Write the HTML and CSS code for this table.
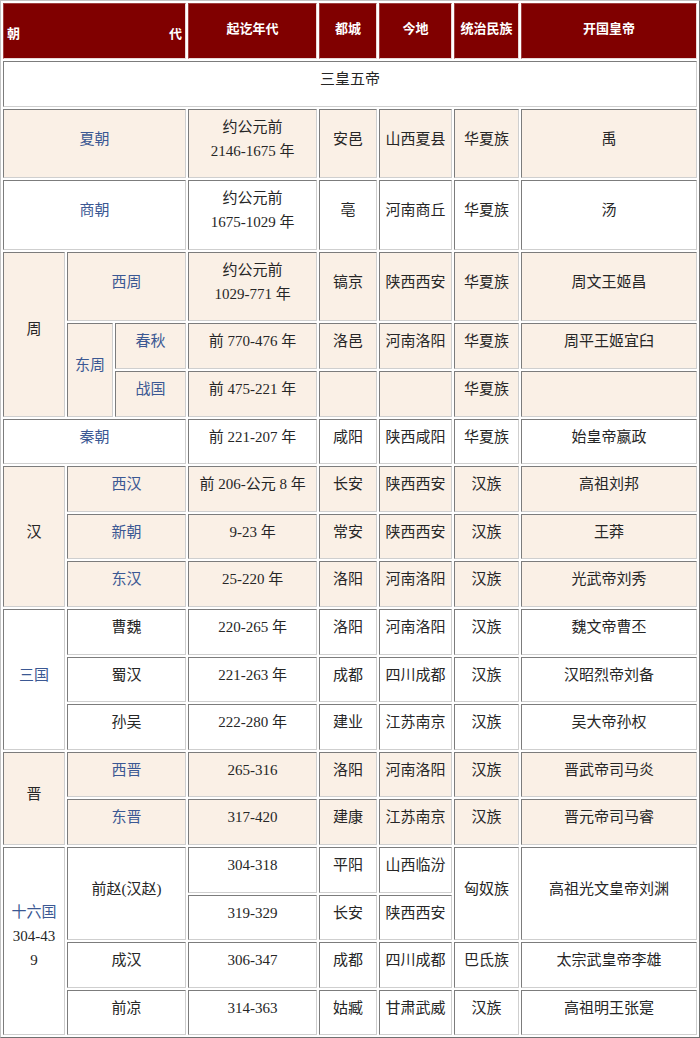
FILE: index.html
```html
<!DOCTYPE html>
<html lang="zh">
<head>
<meta charset="utf-8">
<title>中国历代王朝</title>
<link rel="stylesheet" href="styles.css">
</head>
<body>
<table class="dyn">
  <colgroup>
    <col class="c1"><col class="c2"><col class="c3"><col class="c4"><col class="c5"><col class="c6"><col class="c7"><col class="c8">
  </colgroup>
  <tr class="head">
    <th colspan="3" class="hd-dyn"><div class="split"><span>朝</span><span>代</span></div></th>
    <th>起讫年代</th>
    <th>都城</th>
    <th>今地</th>
    <th>统治民族</th>
    <th>开国皇帝</th>
  </tr>
  <tr>
    <td colspan="8">三皇五帝</td>
  </tr>
  <tr class="bg">
    <td colspan="3" class="lk">夏朝</td>
    <td>约公元前<br>2146-1675 年</td>
    <td>安邑</td>
    <td>山西夏县</td>
    <td>华夏族</td>
    <td>禹</td>
  </tr>
  <tr>
    <td colspan="3" class="lk">商朝</td>
    <td>约公元前<br>1675-1029 年</td>
    <td>亳</td>
    <td>河南商丘</td>
    <td>华夏族</td>
    <td>汤</td>
  </tr>
  <tr class="bg">
    <td rowspan="3">周</td>
    <td colspan="2" class="lk">西周</td>
    <td>约公元前<br>1029-771 年</td>
    <td>镐京</td>
    <td>陕西西安</td>
    <td>华夏族</td>
    <td>周文王姬昌</td>
  </tr>
  <tr class="bg">
    <td rowspan="2" class="lk">东周</td>
    <td class="lk">春秋</td>
    <td>前 770-476 年</td>
    <td>洛邑</td>
    <td>河南洛阳</td>
    <td>华夏族</td>
    <td>周平王姬宜臼</td>
  </tr>
  <tr class="bg">
    <td class="lk">战国</td>
    <td>前 475-221 年</td>
    <td></td>
    <td></td>
    <td>华夏族</td>
    <td></td>
  </tr>
  <tr>
    <td colspan="3" class="lk">秦朝</td>
    <td>前 221-207 年</td>
    <td>咸阳</td>
    <td>陕西咸阳</td>
    <td>华夏族</td>
    <td>始皇帝嬴政</td>
  </tr>
  <tr class="bg">
    <td rowspan="3">汉</td>
    <td colspan="2" class="lk">西汉</td>
    <td>前 206-公元 8 年</td>
    <td>长安</td>
    <td>陕西西安</td>
    <td>汉族</td>
    <td>高祖刘邦</td>
  </tr>
  <tr class="bg">
    <td colspan="2" class="lk">新朝</td>
    <td>9-23 年</td>
    <td>常安</td>
    <td>陕西西安</td>
    <td>汉族</td>
    <td>王莽</td>
  </tr>
  <tr class="bg">
    <td colspan="2" class="lk">东汉</td>
    <td>25-220 年</td>
    <td>洛阳</td>
    <td>河南洛阳</td>
    <td>汉族</td>
    <td>光武帝刘秀</td>
  </tr>
  <tr>
    <td rowspan="3" class="lk">三国</td>
    <td colspan="2">曹魏</td>
    <td>220-265 年</td>
    <td>洛阳</td>
    <td>河南洛阳</td>
    <td>汉族</td>
    <td>魏文帝曹丕</td>
  </tr>
  <tr>
    <td colspan="2">蜀汉</td>
    <td>221-263 年</td>
    <td>成都</td>
    <td>四川成都</td>
    <td>汉族</td>
    <td>汉昭烈帝刘备</td>
  </tr>
  <tr>
    <td colspan="2">孙吴</td>
    <td>222-280 年</td>
    <td>建业</td>
    <td>江苏南京</td>
    <td>汉族</td>
    <td>吴大帝孙权</td>
  </tr>
  <tr class="bg">
    <td rowspan="2">晋</td>
    <td colspan="2" class="lk">西晋</td>
    <td>265-316</td>
    <td>洛阳</td>
    <td>河南洛阳</td>
    <td>汉族</td>
    <td>晋武帝司马炎</td>
  </tr>
  <tr class="bg">
    <td colspan="2" class="lk">东晋</td>
    <td>317-420</td>
    <td>建康</td>
    <td>江苏南京</td>
    <td>汉族</td>
    <td>晋元帝司马睿</td>
  </tr>
  <tr>
    <td rowspan="4"><span class="lk">十六国</span><br>304-43<br>9</td>
    <td colspan="2" rowspan="2">前赵(汉赵)</td>
    <td>304-318</td>
    <td>平阳</td>
    <td>山西临汾</td>
    <td rowspan="2">匈奴族</td>
    <td rowspan="2">高祖光文皇帝刘渊</td>
  </tr>
  <tr>
    <td>319-329</td>
    <td>长安</td>
    <td>陕西西安</td>
  </tr>
  <tr>
    <td colspan="2">成汉</td>
    <td>306-347</td>
    <td>成都</td>
    <td>四川成都</td>
    <td>巴氐族</td>
    <td>太宗武皇帝李雄</td>
  </tr>
  <tr>
    <td colspan="2">前凉</td>
    <td>314-363</td>
    <td>姑臧</td>
    <td>甘肃武威</td>
    <td>汉族</td>
    <td>高祖明王张寔</td>
  </tr>
</table>
</body>
</html>
```

FILE: styles.css
```css
html, body {
  margin: 0;
  padding: 0;
  background: #ffffff;
}

body {
  font-family: "Liberation Serif", "Noto Sans CJK SC", serif;
  color: #262626;
}

.dyn {
  width: 700px;
  table-layout: fixed;
  border-collapse: separate;
  border-spacing: 2px;
  border: 1px solid;
  border-color: #c4c4c4 #707070 #707070 #c4c4c4;
}

.c1 { width: 62px; }
.c2 { width: 46px; }
.c3 { width: 71px; }
.c4 { width: 129px; }
.c5 { width: 58px; }
.c6 { width: 73px; }
.c7 { width: 65px; }
.c8 { width: 176px; }

.dyn td,
.dyn th {
  box-sizing: border-box;
  border: 1px solid;
  border-color: #7c7c7c #cfcfcf #cfcfcf #7c7c7c;
  padding: 5px 2px 14.6px;
  font-size: 15px;
  line-height: 24px;
  text-align: center;
  vertical-align: middle;
  font-weight: normal;
}

.dyn th {
  background: #800000;
  color: #ffffff;
  font-family: "Noto Sans CJK SC", sans-serif;
  font-size: 13px;
  font-weight: bold;
  padding: 12px 2px 18px;
  border-color: #a04040 #e8d8d8 #e8d8d8 #a04040;
}

.dyn th.hd-dyn {
  padding: 17px 3px 13px;
}

.split {
  display: flex;
  justify-content: space-between;
}

.bg td {
  background: #faf0e6;
}

.lk {
  color: #3b5893;
}
```
